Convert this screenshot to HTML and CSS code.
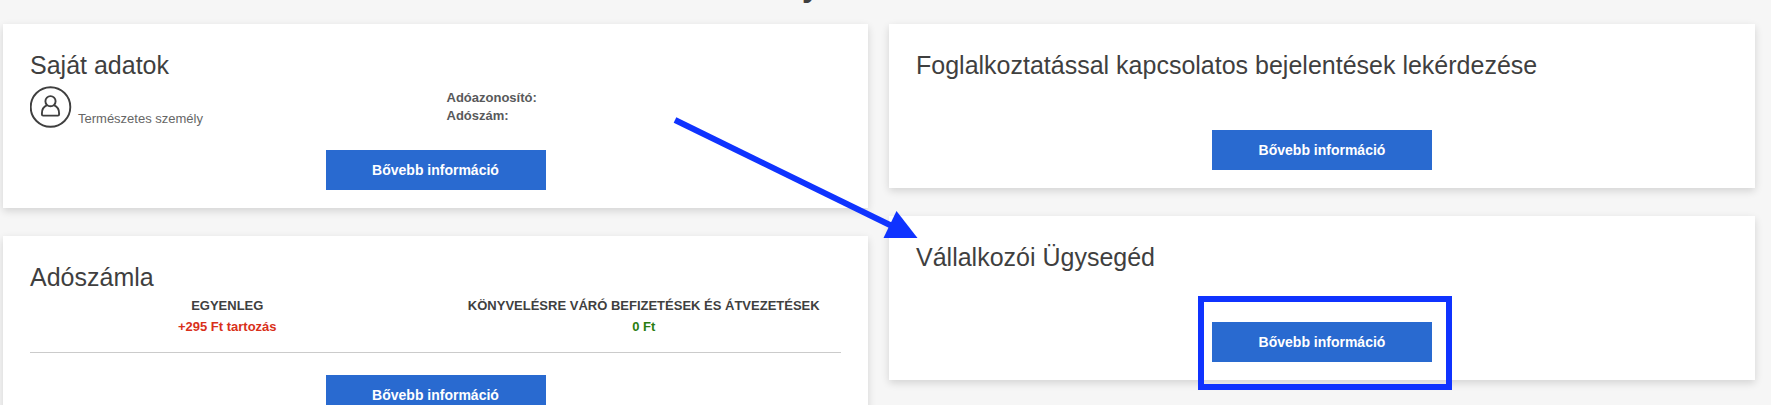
FILE: index.html
```
<!DOCTYPE html>
<html lang="hu">
<head>
<meta charset="utf-8">
<title>Saját adatok</title>
<link rel="stylesheet" href="styles.css">
</head>
<body>
<header class="page-header">
  <h1 class="page-title">y</h1>
</header>
<main class="board">
  <div class="column">
    <section class="card">
      <h2 class="card-title">Saját adatok</h2>
      <div class="row person">
        <div class="cell person-type">
          <svg class="avatar" viewBox="0 0 42 42" fill="none" stroke="#3f3f3f" aria-hidden="true">
            <circle cx="20.500" cy="21" r="19.8" stroke-width="1.9"/>
            <circle cx="20.500" cy="15.2" r="5.1" stroke-width="1.9"/>
            <path d="M17.1 19.2C13.7 20.6 11.900 23.7 11.900 27.4V28.2Q11.900 29.6 13.100 29.6H27.900Q29.100 29.6 29.100 28.2V27.4C29.100 23.7 27.3 20.6 23.9 19.2" stroke-width="1.9"/>
          </svg>
          <span>Természetes személy</span>
        </div>
        <div class="cell ids">
          <div>Adóazonosító:</div>
          <div>Adószám:</div>
        </div>
      </div>
      <div class="actions"><button class="more" type="button">Bővebb információ</button></div>
    </section>
    <section class="card">
      <h2 class="card-title">Adószámla</h2>
      <div class="row account">
        <div class="cell">
          <div class="label">EGYENLEG</div>
          <div class="amount debt">+295 Ft tartozás</div>
        </div>
        <div class="cell">
          <div class="label">KÖNYVELÉSRE VÁRÓ BEFIZETÉSEK ÉS ÁTVEZETÉSEK</div>
          <div class="amount clear">0 Ft</div>
        </div>
      </div>
      <hr class="rule">
      <div class="actions"><button class="more" type="button">Bővebb információ</button></div>
    </section>
  </div>
  <div class="column">
    <section class="card simple">
      <h2 class="card-title">Foglalkoztatással kapcsolatos bejelentések lekérdezése</h2>
      <div class="actions"><button class="more" type="button">Bővebb információ</button></div>
    </section>
    <section class="card simple">
      <svg class="arrow" viewBox="0 0 250 124" fill="#0f33ff" aria-hidden="true">
        <path d="M5 6L222 112" stroke="#0f33ff" stroke-width="6"/>
        <path d="M226.500 97L247.500 124H213.500Z"/>
      </svg>
      <h2 class="card-title">Vállalkozói Ügysegéd</h2>
      <div class="actions">
        <div class="marked"><button class="more" type="button">Bővebb információ</button></div>
      </div>
    </section>
  </div>
</main>
</body>
</html>
```
FILE: styles.css
```
* {
  box-sizing: border-box;
}

body {
  margin: 0;
  background: #f6f6f6;
  color: #3f3f3f;
  font-family: "Liberation Sans", Arial, sans-serif;
  font-size: 13px;
  line-height: 18px;
}

/* The heading is scrolled almost out of view. */
.page-header {
  padding: 0 0 23px 802px;
}

.page-title {
  margin: -31px 0 0;
  font-size: 32px;
  line-height: 32px;
  font-weight: 700;
}

.board {
  display: grid;
  grid-template-columns: 865fr 866fr;
  align-items: start;
  gap: 21px;
  padding: 0 16px 28px 3px;
}

.column {
  display: grid;
  gap: 28px;
}

.card {
  position: relative;
  padding: 26px 27px 18px;
  background: #fff;
  box-shadow: 0 3px 8px rgba(0, 0, 0, 0.14);
}

.card-title {
  margin: 0;
  font-size: 25px;
  line-height: 30px;
  font-weight: 400;
}

.row {
  display: grid;
  grid-template-columns: 1fr 1fr;
  margin: 0 -11px;
}

.cell {
  padding: 0 11px;
}

.person {
  padding: 6px 0 22px;
}

.person-type {
  display: flex;
  align-items: flex-end;
  gap: 6px;
  color: #666;
}

.avatar {
  width: 42px;
  height: 42px;
}

.ids {
  padding-top: 3px;
  color: #58595b;
  font-weight: 700;
}

.account {
  padding: 3px 0 15px;
  text-align: center;
  font-weight: 700;
  line-height: 21px;
}

.debt {
  color: #d9301a;
}

.clear {
  color: #2a7d10;
}

.rule {
  margin: 0 0 22px;
  border: 0;
  border-top: 1px solid #cbcbcb;
}

.actions {
  display: flex;
  justify-content: center;
}

.simple .actions {
  padding-top: 50px;
}

.more {
  width: 220px;
  height: 40px;
  padding: 0;
  border: 0;
  background: #296ad0;
  color: #fff;
  font: 700 14px/20px "Liberation Sans", Arial, sans-serif;
  cursor: pointer;
}

.marked {
  position: relative;
}

.marked::after {
  content: "";
  position: absolute;
  inset: -26px -20px -28px -14px;
  border: 6px solid #0f33ff;
  pointer-events: none;
}

.arrow {
  position: absolute;
  top: -102px;
  left: -219px;
  width: 250px;
  height: 124px;
  pointer-events: none;
}
```
